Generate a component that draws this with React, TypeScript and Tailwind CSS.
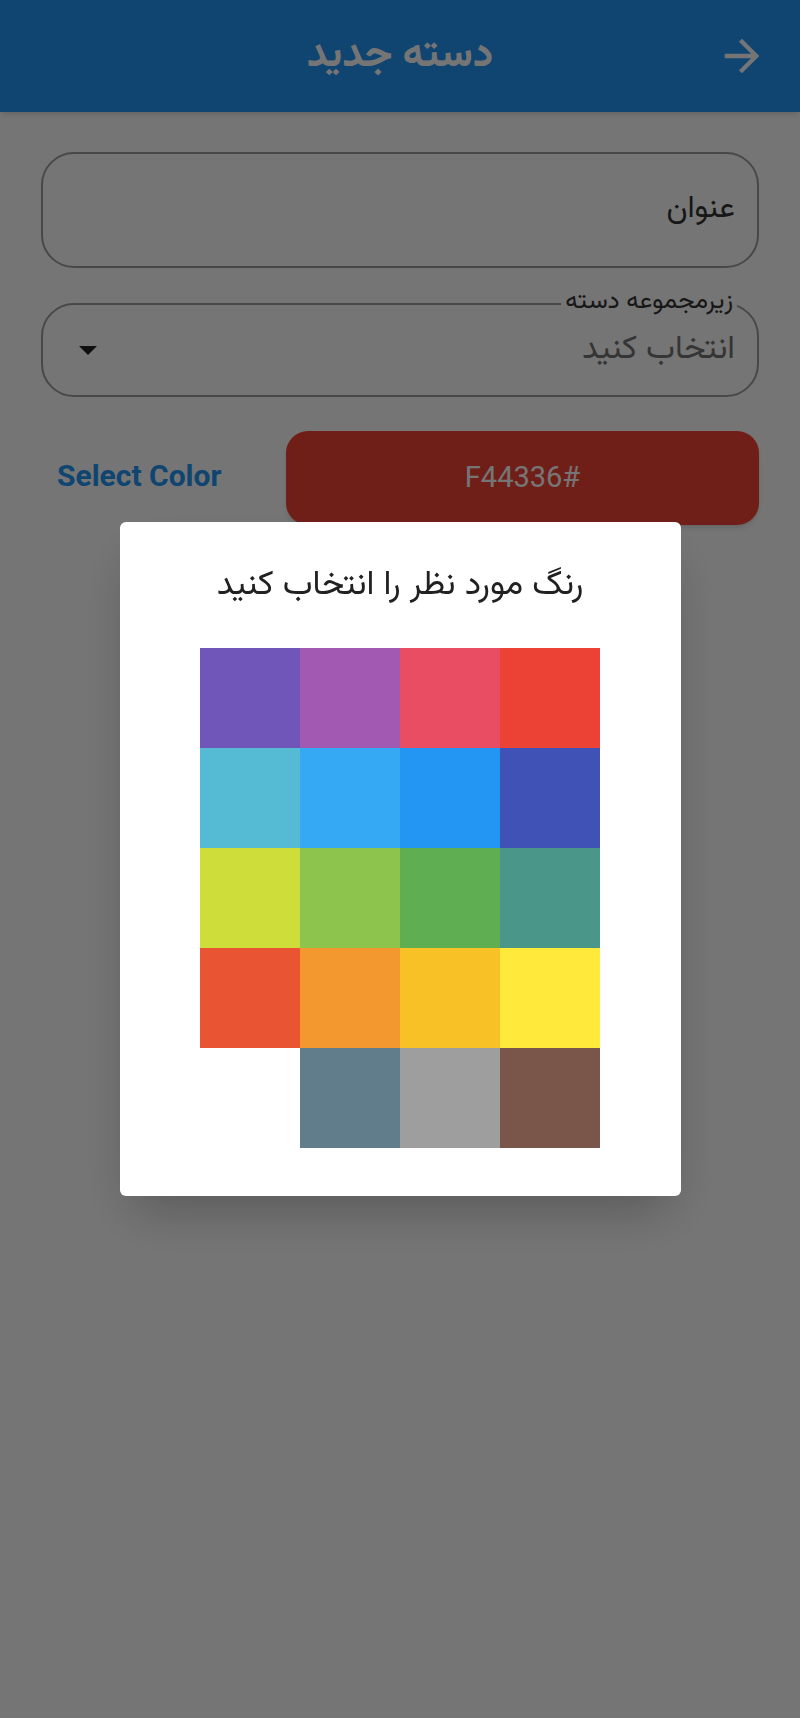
import { MdArrowForward } from "react-icons/md";

const fa = "font-['Vazirmatn','Noto_Sans_Arabic','DejaVu_Sans',sans-serif]";

const swatches: (string | null)[] = [
  "#7056b8", "#a259b1", "#e94d63", "#ec4235",
  "#55bbd4", "#36a9f4", "#2296f2", "#4152b6",
  "#cfdd3a", "#8dc44d", "#5faf52", "#4a978a",
  "#e95533", "#f2982e", "#f8c125", "#ffea3b",
  null, "#617d8b", "#9e9e9e", "#795649",
];

const ColorDialog = () => {
  return (
    <div className="fixed inset-0 z-20 flex items-center justify-center bg-black/[0.54]">
      <div className="flex h-[674px] w-[561px] flex-col items-center rounded-[6px] bg-white shadow-2xl">
        <h2 className={`mt-[40px] text-[34px] leading-[48px] text-[#212121] ${fa}`}>
          رنگ مورد نظر را انتخاب کنید
        </h2>
        <div className="mt-[38px] grid grid-cols-4" dir="ltr">
          {swatches.map((c, i) =>
            c ? (
              <button key={i} className="h-[100px] w-[100px]" style={{ backgroundColor: c }} />
            ) : (
              <div key={i} className="h-[100px] w-[100px]" />
            )
          )}
        </div>
      </div>
    </div>
  );
};

const NewCategoryPage = () => {
  return (
    <div dir="rtl" className="relative min-h-screen bg-white">
      <header className="relative flex h-[112px] items-center justify-center bg-[#2196f3] shadow-md">
        <button className="absolute right-[32px] top-[30px] text-white">
          <MdArrowForward size={52} />
        </button>
        <h1 className={`text-[41px] font-bold leading-[56px] text-white ${fa}`}>دسته جدید</h1>
      </header>

      <div className="flex flex-col px-[41px]">
        <div className="mt-[40px] flex h-[116px] items-center rounded-[33px] border-2 border-[#9e9e9e] px-[22px]">
          <span className={`text-[31px] text-[#333333] ${fa}`}>عنوان</span>
        </div>

        <div className="relative mt-[35px] flex h-[94px] items-center justify-between rounded-[33px] border-2 border-[#9e9e9e] pl-[36px] pr-[22px]">
          <span className={`absolute -top-[18px] right-[20px] bg-white px-[4px] text-[25px] leading-[30px] text-[#333333] ${fa}`}>
            زیرمجموعه دسته
          </span>
          <span className={`mt-[2px] text-[33px] text-[#757575] ${fa}`}>انتخاب کنید</span>
          <span className="h-0 w-0 border-x-[9px] border-t-[9px] border-x-transparent border-t-[#212121]" />
        </div>

        <div className="mt-[34px] flex items-center">
          <button className="flex h-[94px] w-[473px] items-center justify-center rounded-[22px] bg-[#f44336] shadow-md">
            <span className="font-['Roboto',sans-serif] text-[29px] text-white">#F44336</span>
          </button>
          <div className="flex flex-1 justify-end pb-[6px] pl-[16px]" dir="rtl">
            <button className="font-['Roboto',sans-serif] text-[30px] font-bold text-[#2196f3]" dir="ltr">
              Select Color
            </button>
          </div>
        </div>
      </div>

      <ColorDialog />
    </div>
  );
};

export default function App() {
  return <NewCategoryPage />;
}
